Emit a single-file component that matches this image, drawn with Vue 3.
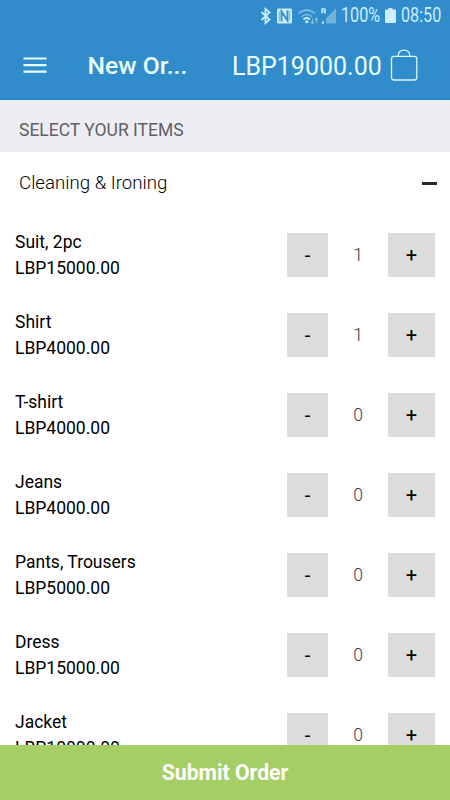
<script setup>
import { reactive } from 'vue'

const items = reactive([
  { name: 'Suit, 2pc', price: 'LBP15000.00', qty: 1 },
  { name: 'Shirt', price: 'LBP4000.00', qty: 1 },
  { name: 'T-shirt', price: 'LBP4000.00', qty: 0 },
  { name: 'Jeans', price: 'LBP4000.00', qty: 0 },
  { name: 'Pants, Trousers', price: 'LBP5000.00', qty: 0 },
  { name: 'Dress', price: 'LBP15000.00', qty: 0 },
  { name: 'Jacket', price: 'LBP10000.00', qty: 0 }
])
</script>

<template>
  <div class="screen">
    <header class="header">
      <div class="status">
        <svg class="status-icons" width="80" height="20" viewBox="0 0 80 20" fill="none">
          <path d="M1.500 7l8 7.500-4 3.500V4l4 3.500-8 7.500" stroke="#cbeefb" stroke-width="1.800" />
          <rect x="17" y="3.500" width="15" height="15" rx="1.500" fill="#cbeefb" />
          <path d="M21.500 16.500V6.500L27.500 15.500V5.500" stroke="#318ccc" stroke-width="1.800" />
          <path d="M19.300 6.500v10M29.700 5.500V15.500" stroke="#318ccc" stroke-width=".6" />
          <path d="M38.500 8.500c5-4.500 11.500-4.500 16.500 0" stroke="#7fbde6" stroke-width="1.600" />
          <path d="M41.500 11.800c3.400-3 7.200-3 10.500 0" stroke="#7fbde6" stroke-width="1.500" />
          <path d="M43.500 14.400c2-1.800 4.500-1.800 6.500 0" stroke="#cbeefb" stroke-width="1.900" />
          <circle cx="46.800" cy="16.800" r="1.500" fill="#cbeefb" />
          <path d="M52.500 13.500v5M50.800 16.800l1.700 1.900 1.700-1.900M56.500 18v-5M54.800 14.800l1.700-1.900 1.700 1.900" stroke="#7fbde6" stroke-width="1.100" />
          <path d="M62 8.500V4h2q1.500 0 1.500 1.200T64 6.400h-2M64 6.400l1.700 2.200" stroke="#cbeefb" stroke-width="1.300" />
          <path d="M76 3.500v15H66v-5z" fill="#70b5df" />
          <path d="M64 15.500v3h-3z" fill="#cbeefb" />
        </svg>
        <span class="percent">100%</span>
        <svg class="battery" width="11" height="15" viewBox="0 0 11 15">
          <path d="M3.500 0h4v1.500h2.500q1 0 1 1V14q0 1-1 1H1q-1 0-1-1V2.500q0-1 1-1h2.500z" fill="#d0ecff" />
        </svg>
        <span class="clock">08:50</span>
      </div>
      <div class="toolbar">
        <svg class="menu" width="24" height="18" viewBox="0 0 24 18">
          <path d="M.5 2.500h23M.5 9.200h23M.5 15.700h23" stroke="#e8ffff" stroke-width="2.200" />
        </svg>
        <h1 class="title">New Or...</h1>
        <span class="total">LBP19000.00</span>
        <svg class="bag" width="28" height="32" viewBox="0 0 28 32" fill="none" stroke="#d7f8ff" stroke-width="1.300">
          <rect x="1.500" y="7.400" width="25.300" height="23.600" rx="2.500" />
          <path d="M8 7.400C8.200 3.200 10.500 1.200 14 1.200s5.800 2 6 6.200" />
        </svg>
      </div>
    </header>

    <div class="section">SELECT YOUR ITEMS</div>
    <div class="category">
      <span class="category-name">Cleaning &amp; Ironing</span>
      <span class="collapse"></span>
    </div>

    <main class="list">
      <div v-for="item in items" :key="item.name" class="row">
        <div class="info">
          <div>{{ item.name }}</div>
          <div>{{ item.price }}</div>
        </div>
        <button class="step minus" @click="item.qty = Math.max(0, item.qty - 1)">-</button>
        <span class="qty">{{ item.qty }}</span>
        <button class="step plus" @click="item.qty++">+</button>
      </div>
    </main>

    <button class="submit">Submit Order</button>
  </div>
</template>

<style>
body {
  margin: 0;
  overflow: hidden;
}
</style>

<style scoped>
.screen {
  width: 450px;
  height: 800px;
  display: flex;
  flex-direction: column;
  overflow: hidden;
  background: #fff;
  color: #000;
  font-family: Roboto, sans-serif;
}
.header {
  box-sizing: border-box;
  height: 100px;
  flex: none;
  background: #318ccc;
  border-bottom: 1px solid #2380b9;
}
.status {
  height: 30px;
  display: flex;
  align-items: center;
  padding-left: 260px;
  color: #cbeefb;
  font-size: 19.5px;
  line-height: 30px;
  white-space: nowrap;
}
.status-icons {
  flex: none;
  margin-top: -1px;
}
.percent,
.clock {
  padding-top: 2px;
  transform: scaleX(0.83);
  transform-origin: left center;
}
.percent {
  width: 39px;
  margin-left: 1px;
}
.battery {
  margin-left: 5px;
  flex: none;
}
.clock {
  width: 41px;
  margin-left: 5px;
}
.toolbar {
  height: 70px;
  display: flex;
  align-items: center;
  color: #e8ffff;
  white-space: nowrap;
}
.menu {
  margin-left: 23px;
  flex: none;
}
.title {
  width: 144.5px;
  margin: 0 0 0 40.5px;
  font-size: 24.7px;
  font-weight: 500;
}
.total {
  width: 158px;
  font-size: 25px;
  padding-top: 2px;
}
.bag {
  flex: none;
}
.section {
  box-sizing: border-box;
  height: 52px;
  flex: none;
  padding: 4px 19px 0;
  border-top: 1px solid #def9fc;
  background: #eeedf3;
  color: #606065;
  font-size: 17.5px;
  line-height: 51px;
}
.category {
  height: 62px;
  flex: none;
  display: flex;
  align-items: center;
  justify-content: space-between;
  padding: 0 13px 1px 19px;
  font-size: 18.7px;
  font-weight: 300;
}
.collapse {
  width: 15px;
  height: 3px;
  margin-top: 1px;
  background: #292929;
}
.list {
  flex: 1;
  min-height: 0;
  overflow: hidden;
}
.row {
  height: 80px;
  display: flex;
  align-items: center;
  padding: 0 15px;
}
.info {
  flex: 1;
  font-size: 17.5px;
  line-height: 26px;
}
.step {
  height: 44px;
  border: 0;
  padding: 0;
  background: #dcdcdc;
  color: #000;
  font: 400 20px/44px Roboto, sans-serif;
}
.minus {
  width: 41px;
}
.plus {
  width: 47px;
}
.qty {
  width: 60px;
  text-align: center;
  color: #3c3c3c;
  font-size: 17.5px;
  font-weight: 300;
}
.submit {
  height: 55px;
  flex: none;
  border: 0;
  padding: 0;
  background: #a5cf64;
  color: #fff;
  font: 700 21.2px/55px Roboto, sans-serif;
}
</style>
